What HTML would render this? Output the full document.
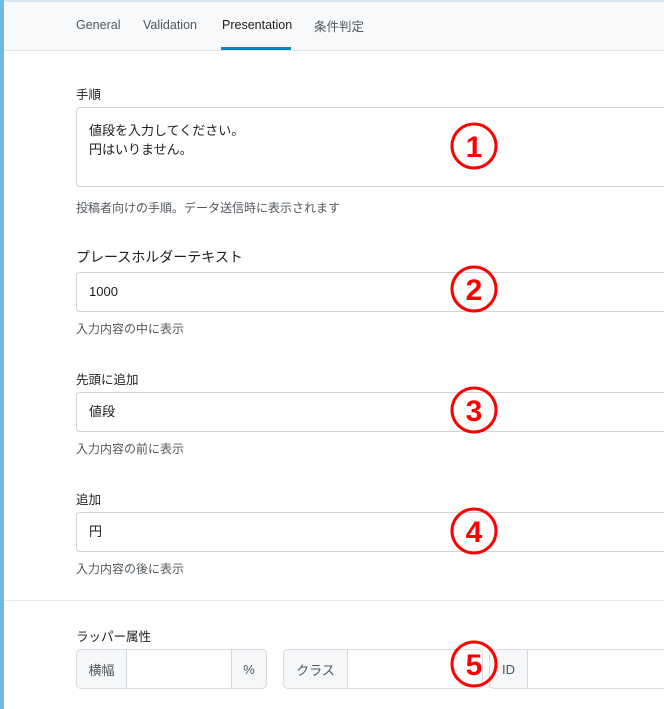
<!DOCTYPE html>
<html><head><meta charset="utf-8"><style>
*{box-sizing:border-box;margin:0;padding:0}
body{width:664px;height:709px;overflow:hidden;background:#fff;font-family:"Liberation Sans","Noto Sans CJK JP",sans-serif;color:#1e1e1e;position:relative}
.stripe{position:absolute;left:0;top:0;width:4px;height:709px;background:#72b7dd}
.topline{position:absolute;left:0;top:0;width:664px;height:2px;background:#d6e7f2}
.hdr{position:absolute;left:4px;top:2px;right:0;height:49px;background:#f8f9fa;border-bottom:1px solid #e2e4e7}
.tab{position:absolute;top:18px;font-size:12.5px;color:#50575e}
.tab.on{color:#1e1e1e}
.ul{position:absolute;left:221px;top:47px;width:70px;height:3px;background:#0783be}
.lbl{position:absolute;left:76px;font-size:12.5px;color:#1e1e1e}
.hint{position:absolute;left:76px;font-size:12px;color:#50575e}
.box{position:absolute;left:76px;width:620px;border:1px solid #cfd3d8;border-radius:4px;background:#fff;font-size:13px;padding-left:12px}
.div{position:absolute;left:4px;right:0;top:600px;height:1px;background:#e8e9eb}
.grp{position:absolute;top:649px;height:40px;border:1px solid #d7dade;border-radius:5px;background:#fff;overflow:hidden;font-size:13px;color:#50575e}
.add{position:absolute;top:0;height:38px;background:#f6f7f8;display:flex;align-items:center;justify-content:center}
svg{position:absolute;left:0;top:0}
</style></head><body>
<div class="topline"></div>
<div class="hdr"></div>
<div class="stripe"></div>
<div class="tab" style="left:76px">General</div>
<div class="tab" style="left:143px">Validation</div>
<div class="tab on" style="left:222px">Presentation</div>
<div class="tab" style="left:314px;top:16px">条件判定</div>
<div class="ul"></div>

<div class="lbl" style="top:84px">手順</div>
<div class="box" style="top:107px;height:80px;padding-top:13px;line-height:19px">値段を入力してください。<br>円はいりません。</div>
<div class="hint" style="top:199px">投稿者向けの手順。データ送信時に表示されます</div>

<div class="lbl" style="top:247px;font-size:14px">プレースホルダーテキスト</div>
<div class="box" style="top:272px;height:40px;line-height:38px">1000</div>
<div class="hint" style="top:320px">入力内容の中に表示</div>

<div class="lbl" style="top:369px">先頭に追加</div>
<div class="box" style="top:392px;height:40px;line-height:38px">値段</div>
<div class="hint" style="top:440px">入力内容の前に表示</div>

<div class="lbl" style="top:489px">追加</div>
<div class="box" style="top:512px;height:40px;line-height:38px">円</div>
<div class="hint" style="top:560px">入力内容の後に表示</div>

<div class="div"></div>
<div class="lbl" style="top:626px">ラッパー属性</div>
<div class="grp" style="left:76px;width:191px">
 <div class="add" style="left:0;width:50px;border-right:1px solid #d7dade">横幅</div>
 <div class="add" style="right:0;width:35px;border-left:1px solid #d7dade">%</div>
</div>
<div class="grp" style="left:283px;width:200px">
 <div class="add" style="left:0;width:64px;border-right:1px solid #d7dade">クラス</div>
</div>
<div class="grp" style="left:489px;width:200px">
 <div class="add" style="left:0;width:38px;border-right:1px solid #d7dade">ID</div>
</div>

<svg width="664" height="709" font-family="Liberation Sans,sans-serif" font-weight="bold" font-size="30" fill="#f00" text-anchor="middle">
 <g fill="none" stroke="#f00" stroke-width="3">
  <circle cx="474" cy="146" r="22"/><circle cx="474" cy="289" r="22"/><circle cx="474" cy="410" r="22"/><circle cx="474" cy="531" r="22"/><circle cx="474" cy="664" r="22"/>
 </g>
 <text x="474" y="157">1</text><text x="474" y="300">2</text><text x="474" y="421">3</text><text x="474" y="542">4</text><text x="474" y="675">5</text>
</svg>
</body></html>
